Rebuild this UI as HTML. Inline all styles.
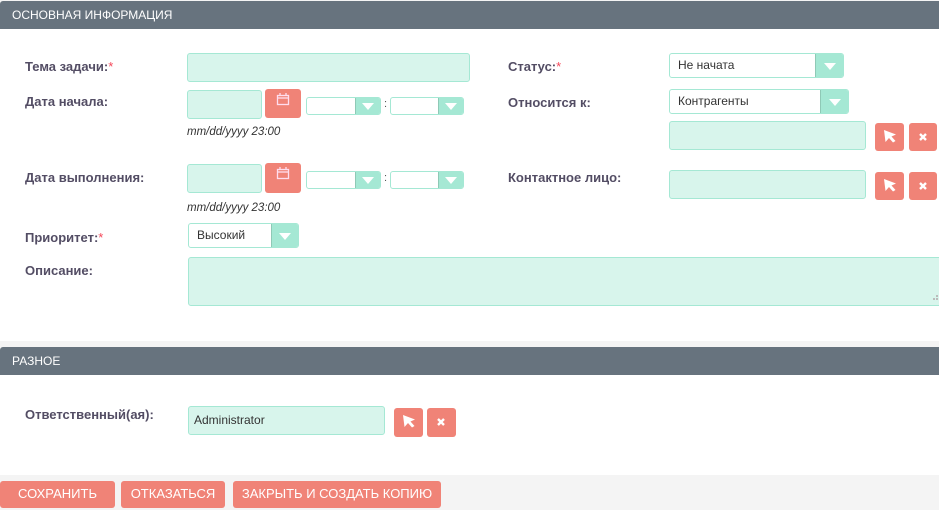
<!DOCTYPE html>
<html><head><meta charset="utf-8">
<style>
*{box-sizing:border-box;margin:0;padding:0}
body{width:939px;height:510px;background:#f4f4f4;font-family:"Liberation Sans",sans-serif;position:relative;overflow:hidden}
.a{position:absolute}
.hdr{background:#67737e;color:#fff;font-size:12px;height:28px;line-height:28px;padding-left:12px;left:0;width:939px;border-radius:3px 0 0 0}
.white{background:#fff;left:0;width:939px}
.lbl{font-size:13px;font-weight:bold;color:#534d64}
.lbl b{color:#f5485a;font-weight:normal}
.inp{background:#d8f5ec;border:1px solid #a5e8d4;border-radius:3px}
.btn{background:#f08377;border-radius:3px}
.sel{background:#fff;border:1px solid #a5e8d4;border-radius:3px;font-size:12px;color:#333;padding-left:8px;overflow:hidden}
.sel .ar{position:absolute;right:0;top:0;bottom:0;width:28px;background:#a5e8d4;border-left:1px solid #8fc9b6}
.sel .ar:after{content:"";position:absolute;left:50%;top:50%;margin:-3px 0 0 -6px;border-left:6px solid transparent;border-right:6px solid transparent;border-top:7px solid #fff}
.hint{font-size:11.5px;font-style:italic;color:#333}
.bb{color:#fff;font-size:13px;text-align:center;line-height:26px}
</style></head><body>
<div class="a white" style="top:28px;height:313px"></div>
<div class="a white" style="top:375px;height:100px"></div>
<div class="a hdr" style="top:1px">ОСНОВНАЯ ИНФОРМАЦИЯ</div>
<div class="a hdr" style="top:347px">РАЗНОЕ</div>

<div class="a lbl" style="left:25px;top:59px">Тема задачи:<b>*</b></div>
<div class="a inp" style="left:187px;top:53px;width:283px;height:29px"></div>

<div class="a lbl" style="left:25px;top:94px">Дата начала:</div>
<div class="a inp" style="left:187px;top:90px;width:75px;height:29px"></div>
<div class="a btn" style="left:265px;top:89px;width:36px;height:29px"><svg width="36" height="29"><g fill="none" stroke="#fde" stroke-width="1.3"><rect x="12.5" y="6.5" width="11" height="9"/><line x1="12.5" y1="9" x2="23.5" y2="9"/><line x1="15" y1="4" x2="15" y2="7"/><line x1="21" y1="4" x2="21" y2="7"/></g></svg></div>
<div class="a sel" style="left:306px;top:97px;width:75px;height:18px"><span class="ar" style="width:25px"></span></div>
<div class="a" style="left:384px;top:98px;font-size:11px;color:#555">:</div>
<div class="a sel" style="left:390px;top:97px;width:74px;height:18px"><span class="ar" style="width:25px"></span></div>
<div class="a hint" style="left:187px;top:126px">mm/dd/yyyy 23:00</div>

<div class="a lbl" style="left:25px;top:170px">Дата выполнения:</div>
<div class="a inp" style="left:187px;top:164px;width:75px;height:29px"></div>
<div class="a btn" style="left:265px;top:163px;width:36px;height:30px"><svg width="36" height="29"><g fill="none" stroke="#fde" stroke-width="1.3"><rect x="12.5" y="6.5" width="11" height="9"/><line x1="12.5" y1="9" x2="23.5" y2="9"/><line x1="15" y1="4" x2="15" y2="7"/><line x1="21" y1="4" x2="21" y2="7"/></g></svg></div>
<div class="a sel" style="left:306px;top:171px;width:75px;height:18px"><span class="ar" style="width:25px"></span></div>
<div class="a" style="left:384px;top:172px;font-size:11px;color:#555">:</div>
<div class="a sel" style="left:390px;top:171px;width:74px;height:18px"><span class="ar" style="width:25px"></span></div>
<div class="a hint" style="left:187px;top:202px">mm/dd/yyyy 23:00</div>

<div class="a lbl" style="left:25px;top:230px">Приоритет:<b>*</b></div>
<div class="a sel" style="left:188px;top:223px;width:111px;height:25px;line-height:23px">Высокий<span class="ar" style="width:27px"></span></div>

<div class="a lbl" style="left:25px;top:263px">Описание:</div>
<div class="a inp" style="left:188px;top:257px;width:760px;height:49px"></div>

<div class="a lbl" style="left:508px;top:59px">Статус:<b>*</b></div>
<div class="a sel" style="left:669px;top:53px;width:175px;height:25px;line-height:23px">Не начата<span class="ar"></span></div>
<div class="a lbl" style="left:508px;top:95px">Относится к:</div>
<div class="a sel" style="left:669px;top:89px;width:180px;height:25px;line-height:23px">Контрагенты<span class="ar"></span></div>
<div class="a inp" style="left:669px;top:121px;width:197px;height:29px"></div>
<div class="a lbl" style="left:508px;top:170px">Контактное лицо:</div>
<div class="a inp" style="left:669px;top:170px;width:197px;height:29px"></div>

<div class="a lbl" style="left:25px;top:407px">Ответственный(ая):</div>
<div class="a inp" style="left:188px;top:406px;width:197px;height:29px;font-size:12px;color:#333;padding-left:5px;line-height:27px">Administrator</div>

<div class="a btn" style="left:875px;top:123px;width:29px;height:28px"></div>
<div class="a btn" style="left:909px;top:123px;width:28px;height:28px"></div>
<div class="a btn" style="left:875px;top:172px;width:29px;height:28px"></div>
<div class="a btn" style="left:909px;top:172px;width:28px;height:28px"></div>
<div class="a btn" style="left:394px;top:408px;width:29px;height:29px"></div>
<div class="a btn" style="left:427px;top:408px;width:29px;height:29px"></div>
<svg class="a" style="left:0;top:0" width="939" height="510">
<defs>
<path id="cur" d="M0 0 L12 4.5 L7.5 6.5 L11.5 11 L9 12.5 L5 8 L1.5 12 Z" fill="#fff"/>
<path id="x" d="M-3 -3 L3 3 M3 -3 L-3 3" stroke="#fff" stroke-width="2.4"/>
</defs>
<use href="#cur" x="884" y="130"/><use href="#x" x="923" y="137"/>
<use href="#cur" x="884" y="179"/><use href="#x" x="923" y="186"/>
<use href="#cur" x="403" y="415"/><use href="#x" x="441" y="422"/>
<g fill="#bbb"><rect x="933" y="298" width="2" height="2"/><rect x="936" y="298" width="2" height="2"/><rect x="936" y="295" width="2" height="2"/></g>
</svg>

<div class="a btn bb" style="left:0;top:481px;width:115px;height:27px">СОХРАНИТЬ</div>
<div class="a btn bb" style="left:121px;top:481px;width:104px;height:27px">ОТКАЗАТЬСЯ</div>
<div class="a btn bb" style="left:233px;top:481px;width:208px;height:27px">ЗАКРЫТЬ И СОЗДАТЬ КОПИЮ</div>
</body></html>
